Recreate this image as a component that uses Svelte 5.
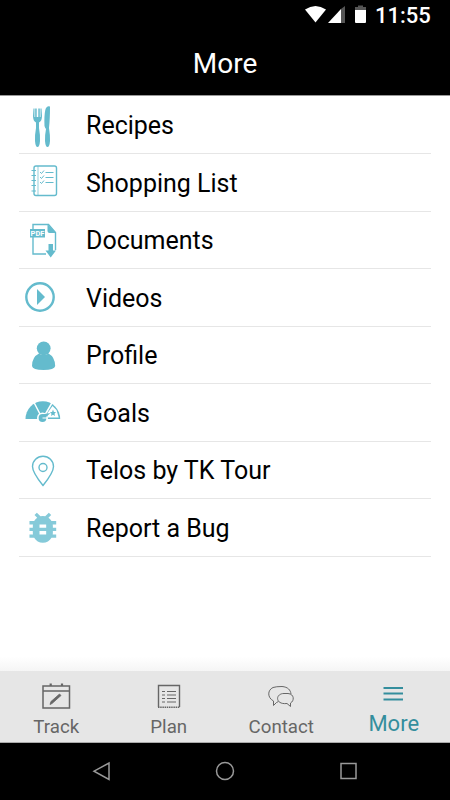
<script>
    let items = [
        { icon: "recipes", label: "Recipes" },
        { icon: "shopping", label: "Shopping List" },
        { icon: "documents", label: "Documents" },
        { icon: "videos", label: "Videos" },
        { icon: "profile", label: "Profile" },
        { icon: "goals", label: "Goals" },
        { icon: "tour", label: "Telos by TK Tour" },
        { icon: "bug", label: "Report a Bug" },
    ]

    let tabs = [
        { icon: "track", label: "Track" },
        { icon: "plan", label: "Plan" },
        { icon: "contact", label: "Contact" },
        { icon: "more", label: "More" },
    ]

    let current = $state("more")
</script>

<div class="screen">
    <div class="statusbar">
        <svg width="72" height="26" viewBox="300 0 72 26">
            <path d="M305 9.5Q315.500 2.500 326 9.500L315.500 22.500Z" fill="#fff" />
            <path d="M341 23V9L328 23Z" fill="#fff" />
            <path d="M341 9L345 6V23H341Z" fill="#555" />
            <path d="M358 5.500H363V7H366V11H355V7H358Z" fill="#555" />
            <path d="M355 10H366V22Q366 23 365 23H356Q355 23 355 22Z" fill="#fff" />
        </svg>
        <span class="clock">11:55</span>
    </div>
    <header><h1>More</h1></header>

    <main>
        <ul>
            {#each items as item}
                <li>
                    <svg class="icon" width="67" height="56" viewBox="0 0 67 56">
                        {#if item.icon === "recipes"}
                            <path d="M14.500 11.500L14 19Q14 24 17 25.500V31Q15.700 38 16 44Q16.500 50 18.500 50T21 44Q21.300 38 20 31V25.500Q23 24 23 19L22.500 11.500H21.500V20H20.800V11.500H19.300V20H17.700V11.500H16.200V20H15.500V11.500Z" />
                            <path d="M31 9.500Q27.500 8.500 26.300 13Q25 19 25.500 29Q26 31 27 32Q25.800 38 26 44Q26.500 50 28.500 50T31 44Q31.200 38 30 31Q31 22 31 9.500Z" />
                        {:else if item.icon === "shopping"}
                            <g class="line">
                                <rect x="15" y="12" width="22.500" height="29.500" rx="2" />
                                <path d="M19 12V41.500" stroke-width=".7" />
                                <path d="M12.500 16.500H17M12.500 21.500H17M12.500 26.500H17M12.500 31.500H17M12.500 37H17" stroke-width="1.200" />
                                <path d="M21 18L22.500 19.500L25 16.500M21 23L22.500 24.500L25 21.500M21 28L22.500 29.500L25 26.500" stroke-width="1" />
                                <path d="M26.500 18.500H34.500M26.500 23.500H34.500M26.500 28.500H34.500" stroke-width="1" />
                            </g>
                        {:else if item.icon === "documents"}
                            <path class="line" d="M14 17V12.500H29.500L36.500 20.500V38M14 25V42H27" />
                            <path d="M28.500 12L37 21H30.500Q28.500 21 28.500 19Z" />
                            <rect x="11" y="17" width="15" height="8.500" />
                            <text x="18.500" y="24">PDF</text>
                            <path d="M29.500 32H34V38.500H37L31.700 45.500L26.500 38.500H29.500Z" />
                        {:else if item.icon === "videos"}
                            <circle class="line ring" cx="21" cy="28" r="13.700" />
                            <path d="M18 20L26 28L18 36Z" />
                        {:else if item.icon === "profile"}
                            <circle cx="24.700" cy="21.300" r="6.900" />
                            <path d="M20 26.500Q24.500 29.500 29.500 26.500Q36 30 36.200 39Q35.500 43 24.500 43T13 39Q13 30 20 26.500Z" />
                        {:else if item.icon === "goals"}
                            <path d="M6.500 35A17.300 17.700 0 0 1 41.200 35Z" />
                            <path class="cut" d="M15 18.500L21.500 31M26.500 30L33.500 18" />
                            <path d="M33.500 22L37.500 26L39.700 33.500H29L28.500 29Z" fill="#fff" />
                            <path d="M34 25.500L34.900 28H37L35.500 29.700L36 32L34 30.700L32 32L32.500 29.700L31 28H33.100Z" />
                            <circle cx="23.500" cy="34" r="5.500" fill="#fff" />
                            <circle cx="23.500" cy="34" r="3.900" />
                            <path d="M23 30.500L31.500 29L27 33Z" />
                            <path d="M23.500 34H28" stroke="#fff" stroke-width="1" />
                        {:else if item.icon === "tour"}
                            <path class="line" d="M24 43.500Q13.500 30.500 13.500 24.500A10.500 10.200 0 0 1 34.500 24.500Q34.500 30.500 24 43.500Z" />
                            <circle class="line" cx="24" cy="25.500" r="4" />
                        {:else}
                            <path class="soft" transform="translate(3.800 8.700) scale(1.670)" d="M20 8h-2.810a5.985 5.985 0 0 0-1.820-1.960L17 4.410 15.590 3l-2.170 2.170a6.002 6.002 0 0 0-2.830 0L8.410 3 7 4.410l1.620 1.630C7.880 6.550 7.260 7.220 6.810 8H4v2h2.090c-.05.330-.09.660-.09 1v1H4v2h2v1c0 .340.040.670.090 1H4v2h2.810c1.040 1.790 2.970 3 5.190 3s4.150-1.210 5.190-3H20v-2h-2.090c.050-.330.090-.660.090-1v-1h2v-2h-2v-1c0-.340-.040-.670-.090-1H20V8zm-6 8h-4v-2h4v2zm0-4h-4v-2h4v2z" />
                        {/if}
                    </svg>
                    <span>{item.label}</span>
                </li>
            {/each}
        </ul>
    </main>

    <nav class="tabs">
        {#each tabs as tab}
            <button class:active={current === tab.icon} onclick={() => (current = tab.icon)}>
                <svg width="30" height="28" viewBox="0 0 30 28">
                    {#if tab.icon === "track"}
                        <path d="M2 3H28.500V25H2ZM2 8H28.500" stroke-width="1.500" />
                        <path d="M9.700 .5V3M21 .5V3" stroke-width="2.200" />
                        <path d="M9 21.500L10 18.500L18.500 11L20 12.500L11 20.500Z" fill="#666" stroke-width=".8" />
                    {:else if tab.icon === "plan"}
                        <path d="M4.500 24V2.500H25.500V24" stroke-width="1.400" />
                        <path d="M4 24.300H26" stroke-width="1.600" stroke-dasharray="1.500 .7" />
                        <path d="M8 8.500H11M13 8.500H22M8 12H11M13 12H22M8 15.500H11M13 15.500H22M8 19H11M13 19H22" stroke-width="1.200" />
                    {:else if tab.icon === "contact"}
                        <path d="M12.500 18.500L10.500 19.500L7.500 22.500V18C1 14.500 1.500 7 7 4.500Q10 3.500 16 3.500C22 4 24.500 7 25 11" />
                        <path d="M18 10.500H22C28.500 11 28.500 18 24.500 20V23.500L21 20.500C9 22 9 10.500 18 10.500Z" />
                    {:else}
                        <path d="M4.500 5H24M4.500 10.500H24M4.500 16.500H24" stroke-width="2" />
                    {/if}
                </svg>
                <span>{tab.label}</span>
            </button>
        {/each}
    </nav>

    <div class="system">
        <svg width="20" height="20" viewBox="0 0 20 20"><path d="M17 2V18.500L2 10.200Z" /></svg>
        <svg width="20" height="20" viewBox="0 0 20 20"><circle cx="10" cy="10" r="8.500" /></svg>
        <svg width="20" height="20" viewBox="0 0 20 20"><rect x="2" y="2.500" width="15" height="15" /></svg>
    </div>
</div>

<style>
    :global(body) {
        margin: 0;
    }

    .screen {
        display: flex;
        flex-direction: column;
        width: 450px;
        height: 800px;
        background: #fff;
        font-family: Roboto, sans-serif;
        color: #000;
        overflow: hidden;
    }

    .statusbar {
        display: flex;
        justify-content: flex-end;
        align-items: center;
        height: 32px;
        padding-right: 19px;
        background: #000;
        color: #fff;
    }

    .statusbar svg {
        height: 26px;
        margin-bottom: 6px;
        margin-right: 3px;
    }

    .clock {
        width: 56px;
        font-size: 22px;
        line-height: 32px;
        font-weight: 500;
        white-space: nowrap;
    }

    header {
        height: 63px;
        background: #000;
        border-bottom: 1px solid #999;
    }

    h1 {
        margin: 0;
        color: #fff;
        font-size: 28px;
        font-weight: 400;
        line-height: 63px;
        text-align: center;
    }

    main {
        flex: 1;
        background: linear-gradient(#fff, #fff 97.500%, #f5f5f5);
    }

    ul {
        margin: 0;
        padding: .5px 19px 0;
        list-style: none;
    }

    li {
        display: flex;
        align-items: center;
        box-sizing: border-box;
        height: 57.500px;
        border-bottom: 1px solid #e6e6e6;
        font-size: 25px;
    }

    li span {
        padding-top: 2px;
        white-space: nowrap;
    }

    .icon {
        flex: none;
        fill: #64bbcd;
    }

    .icon .line {
        fill: none;
        stroke: #64bbcd;
        stroke-width: 1.400;
    }

    .icon .ring {
        stroke-width: 2.400;
    }

    .icon .cut {
        fill: none;
        stroke: #fff;
        stroke-width: 1.500;
    }

    .icon .soft {
        fill: #85cad9;
    }

    .icon text {
        fill: #fff;
        font-size: 7.500px;
        font-weight: 700;
        text-anchor: middle;
    }

    .tabs {
        display: grid;
        grid-template-columns: repeat(4, 1fr);
        height: 71px;
        background: #e6e6e6;
        border-bottom: 1px solid #aaa;
    }

    button {
        display: flex;
        flex-direction: column;
        align-items: center;
        padding: 12px 0 0;
        border: 0;
        background: none;
        color: #666;
        font: 18.700px Roboto, sans-serif;
    }

    button svg {
        fill: none;
        stroke: #666;
        stroke-width: 1;
    }

    button span {
        line-height: 32px;
    }

    button.active {
        color: #348e9d;
        font-size: 22px;
    }

    .active svg {
        stroke: #348e9d;
    }

    .active span {
        margin-top: -3px;
    }

    .system {
        display: flex;
        justify-content: center;
        gap: 103.500px;
        box-sizing: border-box;
        height: 57px;
        padding-top: 18px;
        background: #000;
    }

    .system svg {
        fill: none;
        stroke: #999;
        stroke-width: 1.500;
    }
</style>
